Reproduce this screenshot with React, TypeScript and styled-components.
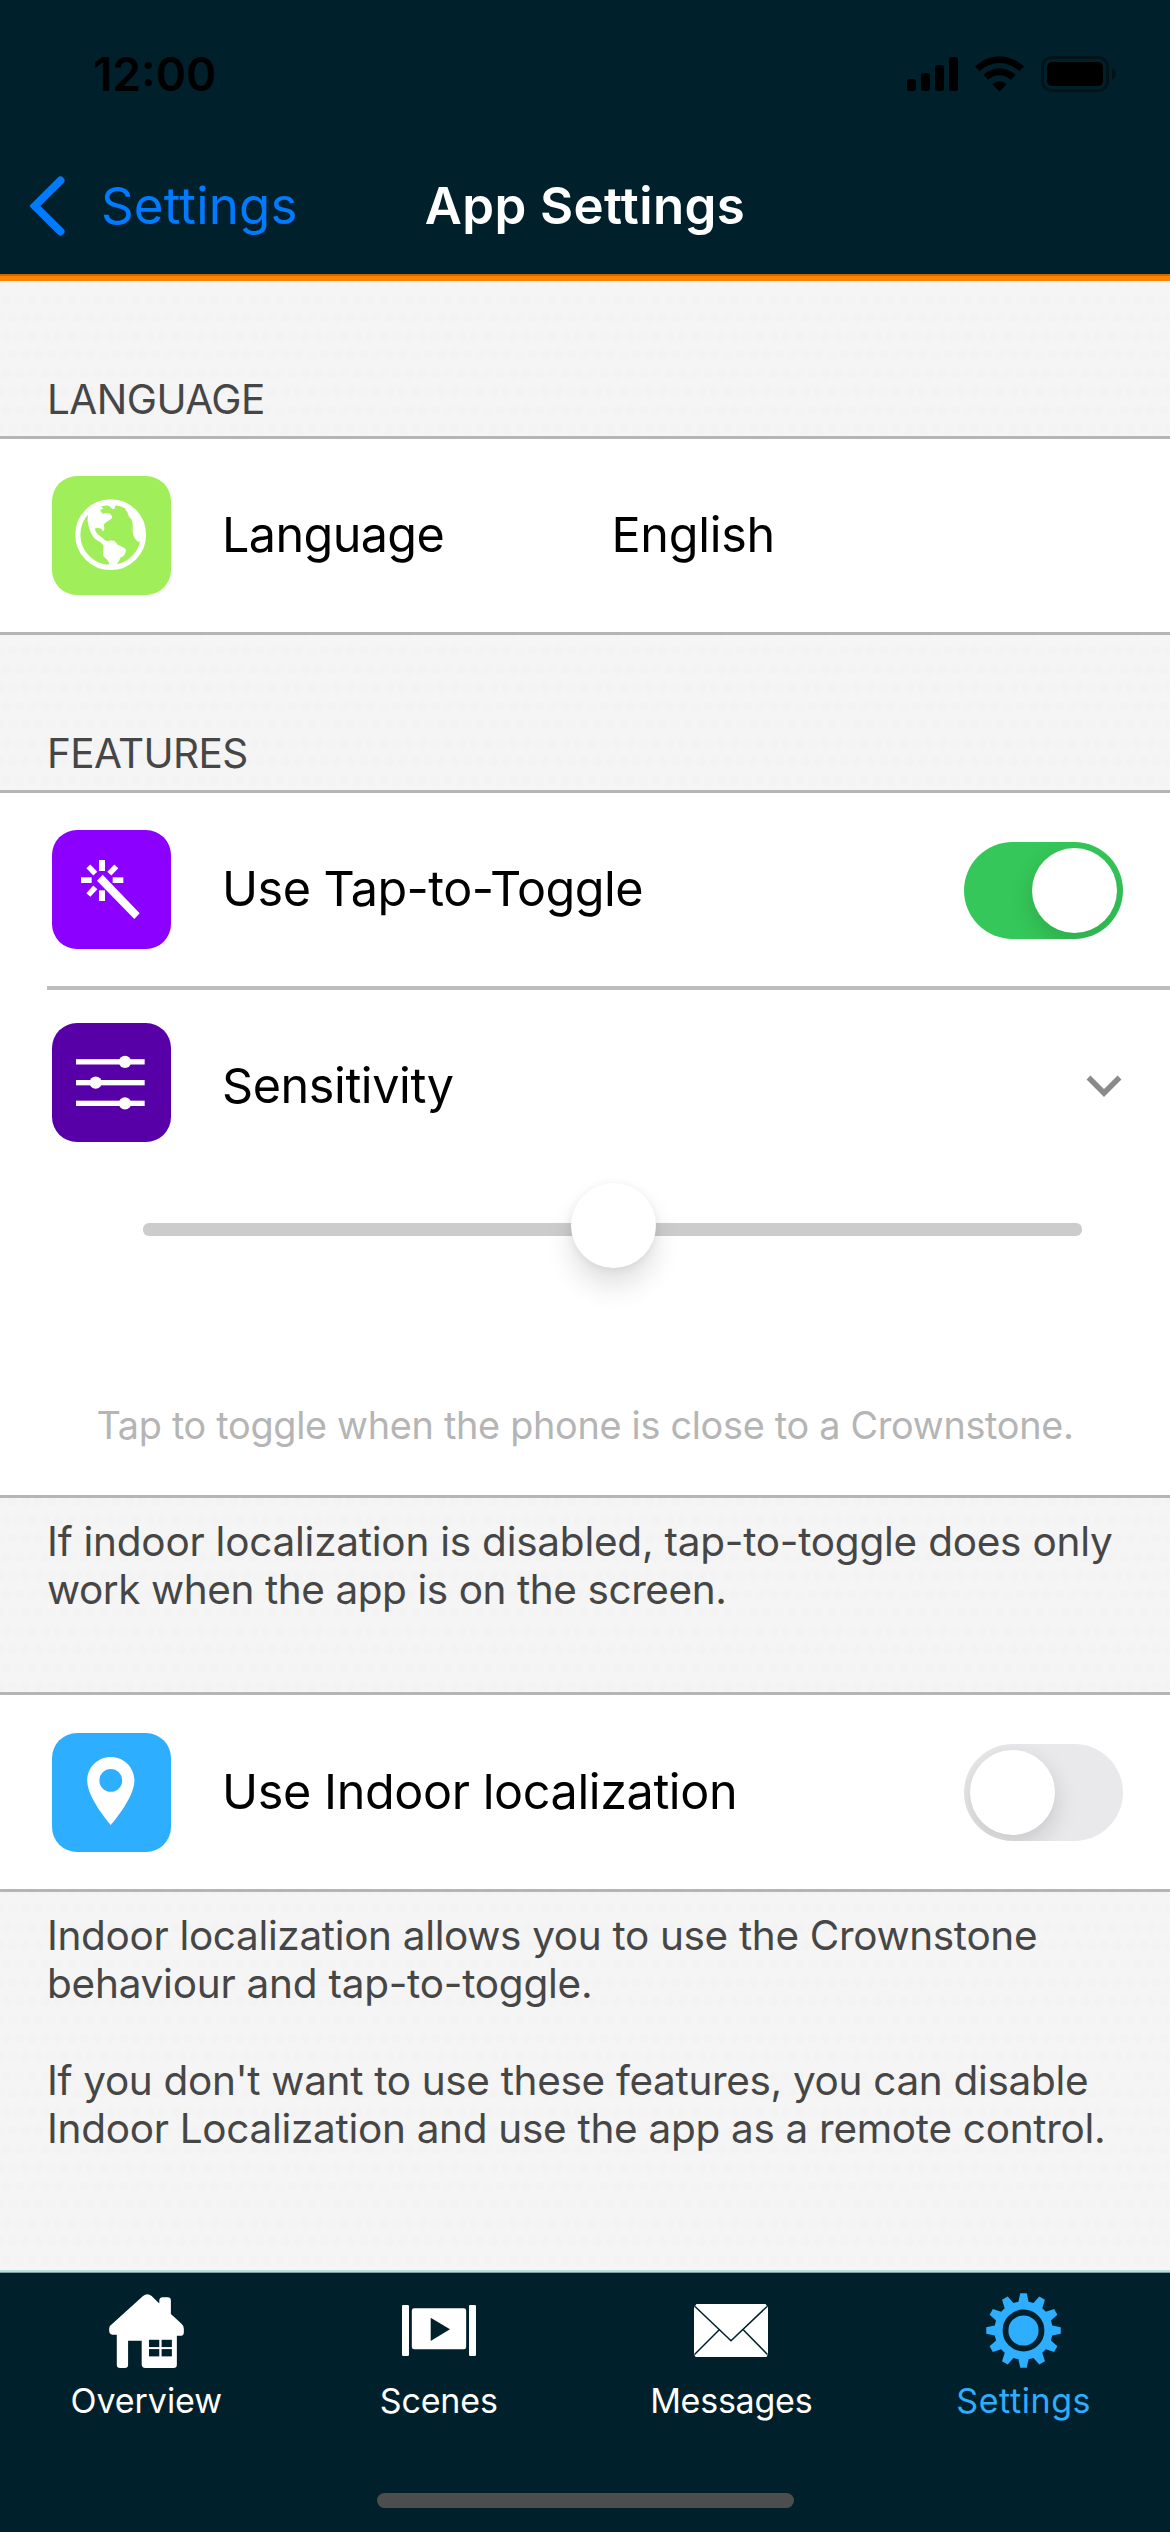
import React from "react";
import styled, { createGlobalStyle } from "styled-components";

const NAVY = "#00212b";
const BLUE = "#2daeff";

const GlobalStyle = createGlobalStyle`
  html, body { margin: 0; padding: 0; }
  body { width: 1170px; height: 2532px; overflow: hidden; background: ${NAVY}; }
  * { box-sizing: border-box; }
`;

const Screen = styled.div`
  display: flex;
  flex-direction: column;
  width: 1170px;
  height: 2532px;
  font-family: Inter, "Liberation Sans", sans-serif;
  color: #000;
`;

/* ---------- header ---------- */

const Header = styled.header`
  flex: none;
  height: 281px;
  background: ${NAVY};
  border-bottom: 5px solid #ff8400;
  box-shadow: inset 0 -2px 0 #c96a05;
`;

const StatusBar = styled.div`
  display: flex;
  align-items: center;
  justify-content: space-between;
  height: 148px;
  padding: 0 54px 0 93px;
`;

const Clock = styled.span`
  font-size: 46px;
  font-weight: 600;
  line-height: 56px;
`;

const StatusIcons = styled.div`
  display: flex;
  align-items: center;
  gap: 17px;
  svg { display: block; }
`;

const NavBar = styled.nav`
  display: grid;
  grid-template-columns: 1fr auto 1fr;
  align-items: center;
  height: 126px;
  padding: 0 30px 10px;
`;

const BackButton = styled.button`
  display: flex;
  align-items: center;
  gap: 36px;
  padding: 0;
  border: 0;
  background: none;
  color: #007aff;
  font: inherit;
  font-size: 51px;
  line-height: 62px;
  letter-spacing: 0.15px;
  svg { display: block; }
`;

const NavTitle = styled.h1`
  margin: 0;
  color: #fff;
  font-size: 51px;
  font-weight: 600;
  line-height: 62px;
  letter-spacing: 0.39px;
`;

/* ---------- settings list ---------- */

const Content = styled.main`
  flex: none;
  height: 1989px;
  background-color: #f5f5f5;
  background-image:
    radial-gradient(circle, #f3f3f3 0, #f3f3f3 3px, rgba(243, 243, 243, 0) 6px),
    radial-gradient(circle, #f3f3f3 0, #f3f3f3 3px, rgba(243, 243, 243, 0) 6px);
  background-size: 13px 37px;
  background-position: 0 0, 6px 18px;
`;

const SectionTitle = styled.h2<{ $ls: number }>`
  display: flex;
  align-items: flex-end;
  height: 155px;
  margin: 0;
  padding: 0 47px 12px;
  color: #464646;
  font-size: 40.5px;
  font-weight: 400;
  line-height: 48px;
  letter-spacing: ${(p) => p.$ls}px;
`;

const List = styled.section`
  background: #fff;
  border-top: 3px solid #b5b5b5;
  border-bottom: 3px solid #b5b5b5;
`;

const Row = styled.div<{ $top?: number }>`
  display: flex;
  align-items: center;
  height: ${(p) => 193 + (p.$top ?? 0)}px;
  padding: ${(p) => p.$top ?? 0}px 47px 0 52px;
`;

const Divider = styled.div`
  height: 4px;
  margin-left: 47px;
  background: #bdbdbd;
`;

const Tile = styled.div<{ $color: string; $raise?: number }>`
  flex: none;
  width: 119px;
  height: 119px;
  margin-right: 51px;
  margin-bottom: ${(p) => p.$raise ?? 0}px;
  border-radius: 25px;
  background: ${(p) => p.$color};
  svg { display: block; width: 119px; height: 119px; }
`;

const RowLabel = styled.span<{ $ls: number; $width?: number }>`
  flex: ${(p) => (p.$width ? `0 0 ${p.$width}px` : "1 1 auto")};
  padding-bottom: 2px;
  font-size: 48.5px;
  line-height: 60px;
  letter-spacing: ${(p) => p.$ls}px;
  white-space: nowrap;
`;

const Switch = styled.button<{ $on?: boolean; $drop: number }>`
  display: flex;
  flex: none;
  align-items: center;
  justify-content: ${(p) => (p.$on ? "flex-end" : "flex-start")};
  width: 159px;
  height: 97px;
  margin-top: ${(p) => p.$drop}px;
  padding: 0 6px;
  border: 0;
  border-radius: 49px;
  overflow: hidden;
  background: ${(p) => (p.$on ? "#35c759" : "#e9e9eb")};
`;

const SwitchKnob = styled.span`
  width: 85px;
  height: 85px;
  border-radius: 50%;
  background: #fff;
  box-shadow: 0 9px 24px rgba(0, 0, 0, 0.15);
`;

const Chevron = styled.svg`
  flex: none;
  display: block;
  width: 36px;
  height: 22px;
  margin: 0 1px 1px 0;
`;

const SliderPanel = styled.div`
  display: flex;
  flex-direction: column;
  height: 312px;
`;

const Slider = styled.div`
  position: relative;
  display: flex;
  align-items: center;
  height: 85px;
  margin: 0 88px 133px 143px;
  padding-top: 8px;
`;

const SliderTrack = styled.div`
  width: 100%;
  height: 13px;
  border-radius: 6px;
  background: #ccc;
`;

const SliderKnob = styled.div`
  position: absolute;
  top: 0;
  left: calc(50% - 42px);
  width: 85px;
  height: 85px;
  border-radius: 50%;
  background: #fff;
  box-shadow: 0 18px 28px rgba(0, 0, 0, 0.12), 0 2px 10px rgba(0, 0, 0, 0.07);
`;

const Hint = styled.p`
  margin: 0;
  color: #b5b5b5;
  font-size: 37.8px;
  line-height: 48px;
  letter-spacing: -0.29px;
  text-align: center;
  white-space: nowrap;
`;

const Note = styled.div<{ $height: number }>`
  height: ${(p) => p.$height}px;
  padding: 20px 0 0 47px;
  color: #464646;
  font-size: 40.5px;
  line-height: 48.2px;
`;

const NoteLine = styled.p<{ $ls: number }>`
  margin: 0;
  letter-spacing: ${(p) => p.$ls}px;
  white-space: nowrap;
`;

const NoteGap = styled.div`
  height: 48.4px;
`;

/* ---------- tab bar ---------- */

const TabBar = styled.footer`
  position: relative;
  flex: 1;
  display: grid;
  grid-template-columns: repeat(4, 1fr);
  background: ${NAVY};
  border-top: 2px solid #b9dfe1;
  box-shadow: inset 0 1px 0 #7f9ea2;
`;

const Tab = styled.a<{ $active?: boolean }>`
  display: flex;
  flex-direction: column;
  align-items: center;
  gap: 13px;
  padding-top: 21px;
  color: ${(p) => (p.$active ? BLUE : "#fff")};
  svg { display: block; }
`;

const TabIcon = styled.span`
  display: flex;
  align-items: center;
  justify-content: center;
  height: 75px;
`;

const TabLabel = styled.span<{ $ls: number }>`
  font-size: 34px;
  line-height: 40px;
  letter-spacing: ${(p) => p.$ls}px;
`;

const HomeIndicator = styled.div`
  position: absolute;
  left: 377px;
  bottom: 24px;
  width: 417px;
  height: 15px;
  border-radius: 8px;
  background: #4d4d4d;
`;

/* ---------- drawings ---------- */

const SignalIcon = () => (
  <svg width="51" height="34" viewBox="0 0 51 34">
    <rect x="0" y="22" width="9" height="12" rx="2.5" />
    <rect x="14" y="16" width="9" height="18" rx="2.5" />
    <rect x="28" y="8" width="9" height="26" rx="2.5" />
    <rect x="42" y="0" width="9" height="34" rx="2.5" />
  </svg>
);

const WifiIcon = () => (
  <svg width="49" height="36" viewBox="0 1 49 36">
    <path d="M0 11.5 A34.5 34.5 0 0 1 49 11.5 L44.3 16.3 A28 28 0 0 0 4.7 16.3 Z" />
    <path d="M8.3 20 A23 23 0 0 1 40.7 20 L36 24.8 A16.5 16.5 0 0 0 13 24.8 Z" />
    <path d="M17.3 29 A10.5 10.5 0 0 1 31.7 29 L24.5 36.4 Z" />
  </svg>
);

const BatteryIcon = () => (
  <svg width="75" height="36" viewBox="0 0 75 36">
    <rect x="1.5" y="1.5" width="65" height="33" rx="9" fill="none" stroke="#000" strokeOpacity="0.4" strokeWidth="3" />
    <rect x="6" y="6" width="56" height="24" rx="5" />
    <path d="M71 12.5 C76.3 14.5 76.3 21.5 71 23.5 Z" fillOpacity="0.45" />
  </svg>
);

const BackIcon = () => (
  <svg width="35" height="60" viewBox="0 0 35 60">
    <path d="M30.5 4.5 L4.8 30 L30.5 55.5" fill="none" stroke="currentColor" strokeWidth="8" strokeLinecap="round" strokeLinejoin="miter" />
  </svg>
);

const GlobeIcon = () => (
  <svg viewBox="36 48 357 357" fill="#fff">
    <circle cx="212" cy="224" r="98.5" fill="none" stroke="#fff" strokeWidth="15.5" />
    <path d="M138 160 L160 136 L190 124 L212 119 L240 124 L274 143 L262 150 C250 141 238 137 229 136 C223 139 227 146 221 147 C214 147 212 141 206 137 C200 137 193 136 186 139 L176 142 C182 140 189 142 189 145 C187 149 181 150 178 154 C183 153 186 155 185 160 C191 162 194 158 200 159 L208 160 C213 165 218 168 216 173 C211 181 200 184 195 190 C190 194 192 200 193 205 C193 210 191 214 187 214 C188 209 184 205 178 205 L168 203 C163 205 165 214 172 221 C180 228 188 233 195 241 C200 245 206 241 213 242 C222 241 228 246 233 254 C242 258 258 264 258 271 C256 282 252 290 242 292 C240 298 236 306 231 312 L229 322 L203 321 L207 310 C206 302 200 297 192 290 C185 280 193 270 190 257 C186 248 178 245 170 240 C156 232 147 207 144 190 C141 180 145 172 143 163 Z" />
    <path d="M255 149 L262 155 C264 165 267 170 273 177 C280 186 278 200 278 214 C279 230 286 241 297 247 L306 240 L312 224 C312 190 296 158 270 140 Z" />
  </svg>
);

const WandIcon = () => (
  <svg viewBox="36 30 357 357" fill="#fff">
    <rect x="177" y="120" width="18" height="33" />
    <rect x="177" y="211" width="18" height="32" />
    <rect x="123" y="172" width="32" height="17" />
    <rect x="218" y="172" width="32" height="17" />
    <path d="M145 139 L166 161 M229 139 L208 161 M145 225 L166 202" stroke="#fff" strokeWidth="16.5" />
    <path d="M171 182 L188 164 L299 280 L283 297 Z" />
  </svg>
);

const SlidersIcon = () => (
  <svg viewBox="36 607 357 357" fill="#fff">
    <rect x="108" y="715.5" width="206" height="16" />
    <rect x="108" y="778" width="206" height="16" />
    <rect x="108" y="840" width="206" height="16" />
    <circle cx="255" cy="723.5" r="18.5" />
    <circle cx="167" cy="786" r="18.5" />
    <circle cx="255" cy="848" r="18.5" />
  </svg>
);

const PinIcon = () => (
  <svg viewBox="0 0 119 119" fill="#fff">
    <path
      fillRule="evenodd"
      d="M58.8 24 C45.7 24 35.2 34.4 35.2 47.5 C35.2 65.2 58.8 92 58.8 92 C58.8 92 82.4 65.2 82.4 47.5 C82.4 34.4 71.9 24 58.8 24 Z M58.8 58.8 A11.4 11.4 0 1 1 58.8 36 A11.4 11.4 0 1 1 58.8 58.8 Z"
    />
  </svg>
);

const HouseIcon = () => (
  <svg width="75" height="74" viewBox="204 131 225 223">
    <path
      fill="currentColor"
      d="M204 242 V234 Q204 227 212 222 L306 137 Q319 126 332 137 L355 160 V152 Q355 141 365 141 H380 Q390 141 390 151 V191 L422 221 Q429 227 429 236 V246 Q429 256 421 257 H408 V344 Q408 354 398 354 H313 Q302 354 302 343 V272 H261 V344 Q261 354 251 354 H237 Q227 354 227 344 V254 H214 Q204 252 204 242 Z"
    />
    <g fill={NAVY}>
      <rect x="324" y="269" width="31" height="22" />
      <rect x="362" y="269" width="31" height="22" />
      <rect x="324" y="297" width="31" height="22" />
      <rect x="362" y="297" width="31" height="22" />
    </g>
  </svg>
);

const ScenesIcon = () => (
  <svg width="74" height="51" viewBox="1086 168 222 153">
    <rect x="1086" y="168" width="21" height="153" rx="4" fill="currentColor" />
    <rect x="1287" y="168" width="21" height="153" rx="4" fill="currentColor" />
    <rect x="1115.5" y="178" width="163" height="123" rx="7" fill="currentColor" />
    <path d="M1172 206 L1230 241 L1172 276 Z" fill={NAVY} />
  </svg>
);

const EnvelopeIcon = () => (
  <svg width="74" height="53" viewBox="0 0 74 53">
    <path d="M2.5 0 H71.5 L74 3.5 V50 L72.5 53 H1.5 L0 50 V3.5 Z" fill="currentColor" />
    <path d="M1 2.5 L37 36.8 L73 2.5 M0.5 50.5 L25 26 M73.5 50.5 L49.5 26" fill="none" stroke={NAVY} strokeWidth="1.5" />
  </svg>
);

const gearPath = Array.from({ length: 12 }, (_, i) => {
  const at = (r: number, offset: number) => {
    const a = (i * 30 + offset - 90) * (Math.PI / 180);
    return `${(37.5 + r * Math.cos(a)).toFixed(2)} ${(37.5 + r * Math.sin(a)).toFixed(2)}`;
  };
  return `${i === 0 ? "M" : "L"}${at(29.2, -10)} L${at(37.4, -5)} L${at(37.4, 5)} L${at(29.2, 10)}`;
}).join(" ");

const GearIcon = () => (
  <svg width="75" height="75" viewBox="0 0 75 75">
    <path d={`${gearPath} Z`} fill="currentColor" />
    <circle cx="37.5" cy="37.5" r="18" fill="none" stroke={NAVY} strokeWidth="5.8" />
  </svg>
);

const tabs = [
  { label: "Overview", icon: <HouseIcon />, ls: -0.05 },
  { label: "Scenes", icon: <ScenesIcon />, ls: -0.19 },
  { label: "Messages", icon: <EnvelopeIcon />, ls: -0.24 },
  { label: "Settings", icon: <GearIcon />, ls: 0.58, active: true },
];

export default function App() {
  return (
    <>
      <GlobalStyle />
      <Screen>
        <Header>
          <StatusBar>
            <Clock>12:00</Clock>
            <StatusIcons>
              <SignalIcon />
              <WifiIcon />
              <BatteryIcon />
            </StatusIcons>
          </StatusBar>
          <NavBar>
            <BackButton>
              <BackIcon />
              Settings
            </BackButton>
            <NavTitle>App Settings</NavTitle>
          </NavBar>
        </Header>

        <Content>
          <SectionTitle $ls={-0.53}>LANGUAGE</SectionTitle>
          <List>
            <Row>
              <Tile $color="#a1ee5b"><GlobeIcon /></Tile>
              <RowLabel $ls={-0.6} $width={389.5}>Language</RowLabel>
              <RowLabel $ls={-0.28}>English</RowLabel>
            </Row>
          </List>

          <SectionTitle $ls={-0.59}>FEATURES</SectionTitle>
          <List>
            <Row>
              <Tile $color="#8b00ff"><WandIcon /></Tile>
              <RowLabel $ls={-0.53}>Use Tap-to-Toggle</RowLabel>
              <Switch $on $drop={2}><SwitchKnob /></Switch>
            </Row>
            <Divider />
            <Row>
              <Tile $color="#5800a8" $raise={8}><SlidersIcon /></Tile>
              <RowLabel $ls={-0.4}>Sensitivity</RowLabel>
              <Chevron viewBox="0 0 36 22">
                <path d="M2.5 2.5 L18 18 L33.5 2.5" fill="none" stroke="#8a8a8a" strokeWidth="5.5" />
              </Chevron>
            </Row>
            <SliderPanel>
              <Slider>
                <SliderTrack />
                <SliderKnob />
              </Slider>
              <Hint>Tap to toggle when the phone is close to a Crownstone.</Hint>
            </SliderPanel>
          </List>
          <Note $height={194}>
            <NoteLine $ls={-0.24}>If indoor localization is disabled, tap-to-toggle does only</NoteLine>
            <NoteLine $ls={-0.43}>work when the app is on the screen.</NoteLine>
          </Note>

          <List>
            <Row $top={1}>
              <Tile $color={BLUE}><PinIcon /></Tile>
              <RowLabel $ls={-0.39}>Use Indoor localization</RowLabel>
              <Switch $drop={0}><SwitchKnob /></Switch>
            </Row>
          </List>
          <Note $height={378}>
            <NoteLine $ls={-0.34}>Indoor localization allows you to use the Crownstone</NoteLine>
            <NoteLine $ls={-0.24}>behaviour and tap-to-toggle.</NoteLine>
            <NoteGap />
            <NoteLine $ls={-0.33}>If you don't want to use these features, you can disable</NoteLine>
            <NoteLine $ls={-0.3}>Indoor Localization and use the app as a remote control.</NoteLine>
          </Note>
        </Content>

        <TabBar>
          {tabs.map((t) => (
            <Tab key={t.label} $active={t.active}>
              <TabIcon>{t.icon}</TabIcon>
              <TabLabel $ls={t.ls}>{t.label}</TabLabel>
            </Tab>
          ))}
          <HomeIndicator />
        </TabBar>
      </Screen>
    </>
  );
}
